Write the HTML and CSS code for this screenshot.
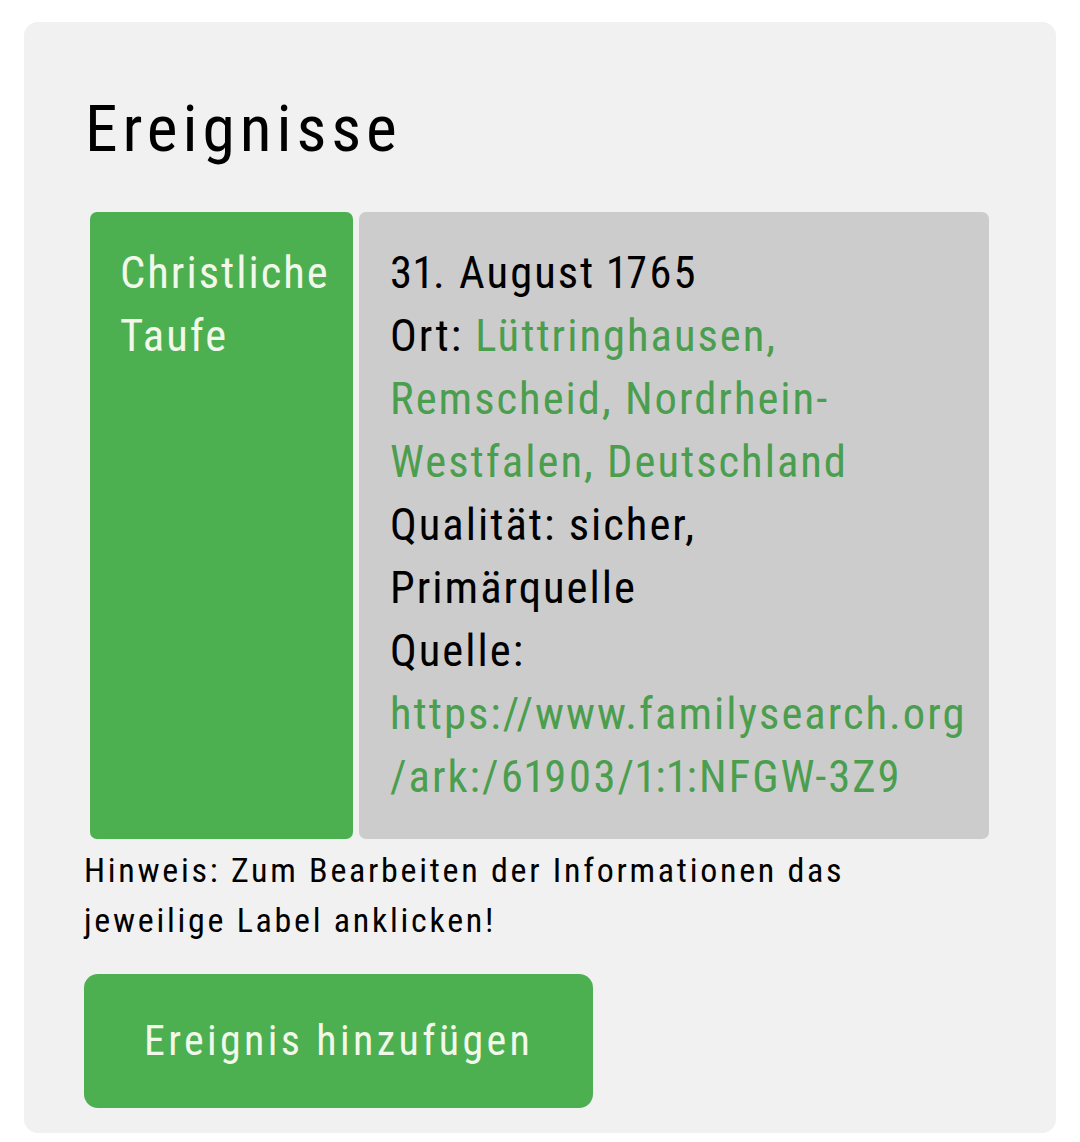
FILE: index.html
```html
<!DOCTYPE html>
<html lang="de">
<head>
<meta charset="utf-8">
<title>Ereignisse</title>
<link rel="stylesheet" href="styles.css">
</head>
<body>
<section class="card">
  <h1 class="card-title">Ereignisse</h1>
  <table class="events">
    <tr>
      <td class="event-label">Christliche Taufe</td>
      <td class="event-info">
        31. August 1765<br>
        Ort: <a class="link" href="#">Lüttringhausen,<br>Remscheid, Nordrhein-<br>Westfalen, Deutschland</a><br>
        Qualität: sicher,<br>Primärquelle<br>
        Quelle:<br>
        <a class="link url" href="#">https://www.familysearch.org<wbr>/ark:/61903/1:1:NFGW-3Z9</a>
      </td>
    </tr>
  </table>
  <p class="hint">Hinweis: Zum Bearbeiten der Informationen das jeweilige Label anklicken!</p>
  <button class="add-btn" type="button">Ereignis hinzufügen</button>
</section>
</body>
</html>
```
FILE: styles.css
```css
html, body {
  margin: 0;
  padding: 0;
  background: #ffffff;
}
body {
  font-family: "Roboto", "Noto Sans", sans-serif;
  font-stretch: 75%;
  font-feature-settings: "pnum" 1;
  color: #000;
}
.card {
  margin: 22px 24px 0 24px;
  height: 1111px;
  box-sizing: border-box;
  padding: 68px 60px 25px 60px;
  background: #f1f1f1;
  border-radius: 14px;
}
.card-title {
  margin: 0;
  font-size: 65.6px;
  line-height: 1.2;
  font-weight: 400;
  letter-spacing: 0.075em;
  padding-left: 1px;
}
.events {
  margin-top: 37px;
  width: 911px;
  border-spacing: 6px;
  border-collapse: separate;
  table-layout: fixed;
}
.events td {
  box-sizing: border-box;
  vertical-align: top;
  font-size: 44.6px;
  line-height: 63px;
  letter-spacing: 0.045em;
  border-radius: 7px;
  padding-top: 30px;
  padding-bottom: 30px;
}
.event-label {
  width: 263px;
  background: #4caf50;
  color: #f1f8e9;
  padding-left: 30px;
  padding-right: 26px;
}
.event-info {
  width: 630px;
  background: #cccccc;
  padding-left: 31px;
  padding-right: 12px;
}
.link {
  color: #4a9e4e;
  text-decoration: none;
}
.hint {
  margin: 0;
  font-size: 34px;
  line-height: 50px;
  letter-spacing: 0.08em;
  width: 800px;
}
.add-btn {
  margin-top: 29px;
  height: 134px;
  padding: 0 60px;
  border: none;
  border-radius: 14px;
  background: #4caf50;
  color: #f1f8e9;
  font-family: "Roboto", "Noto Sans", sans-serif;
  font-stretch: 75%;
  font-size: 42px;
  letter-spacing: 0.08em;
  cursor: pointer;
}
```
